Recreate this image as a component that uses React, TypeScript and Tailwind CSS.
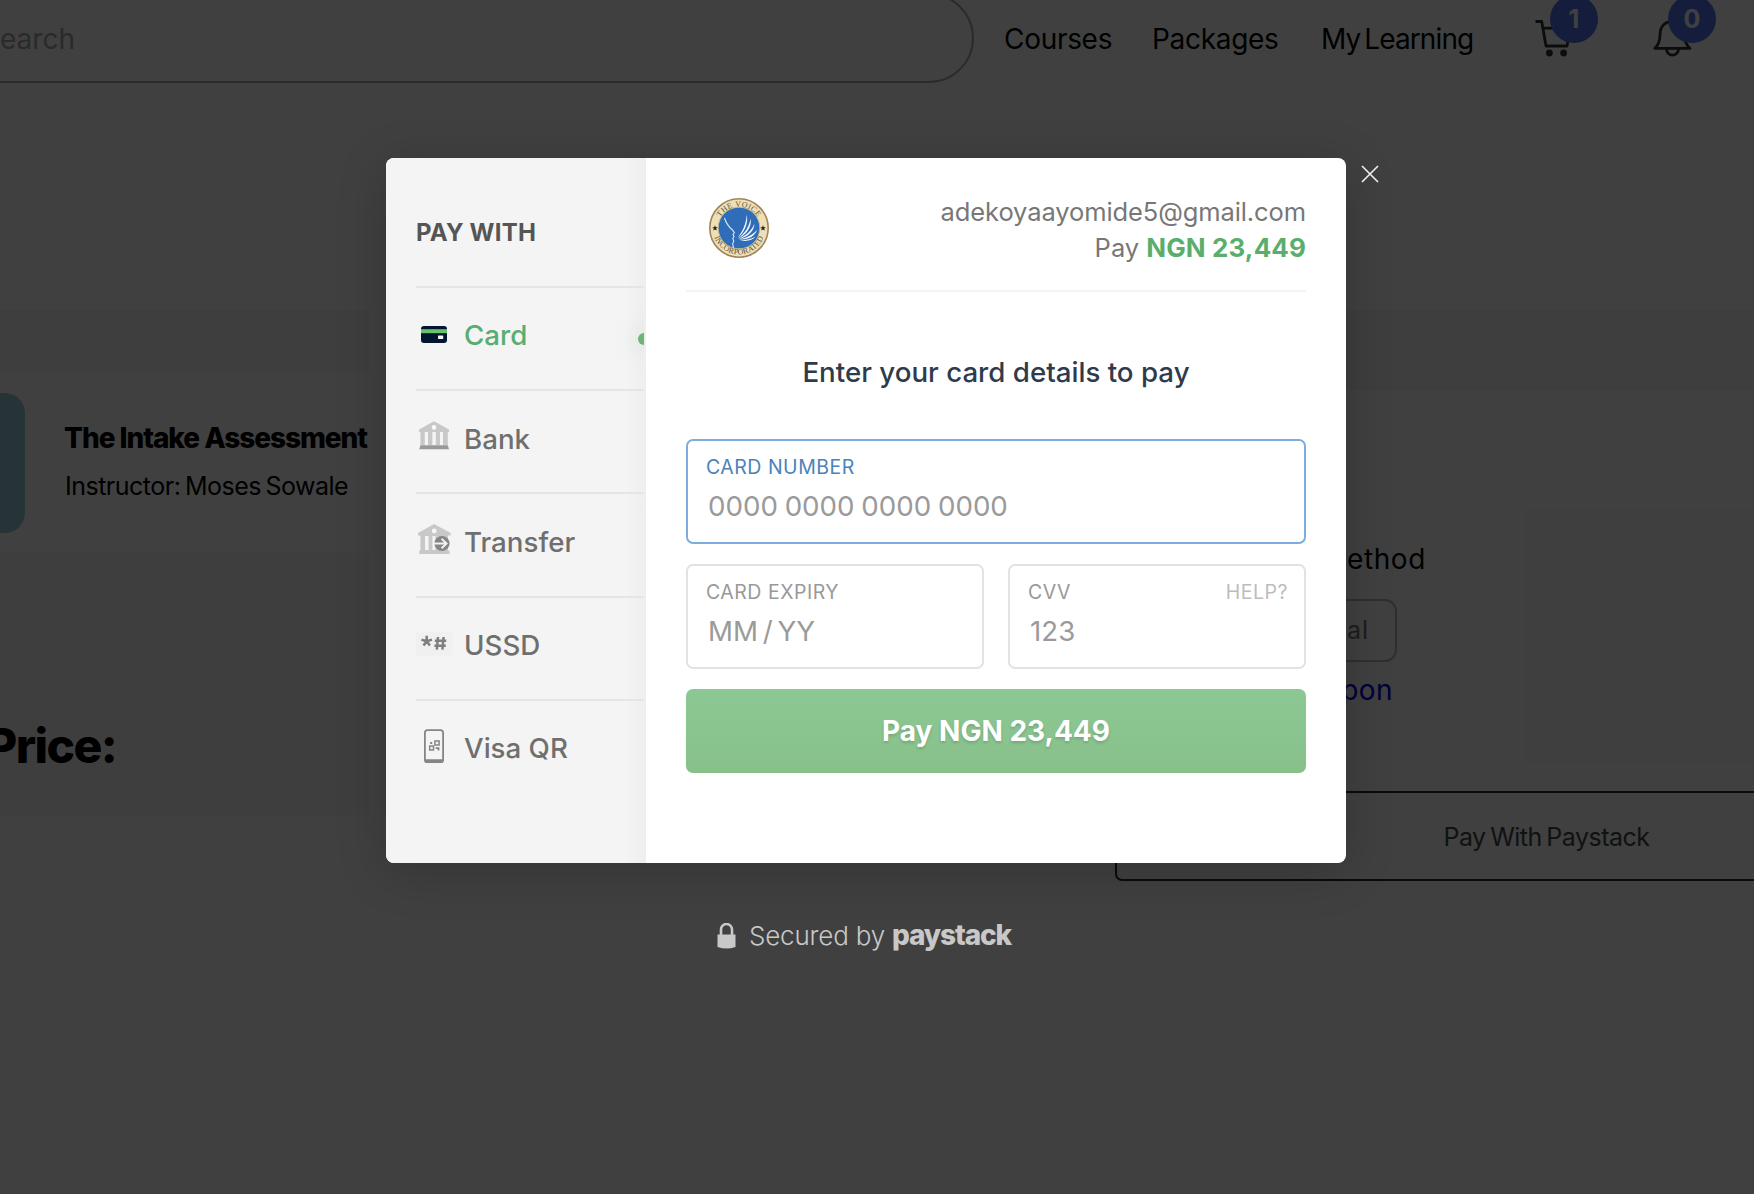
import React from "react";

const CardIcon = () => (
  <svg viewBox="0 0 36 36" className="size-9">
    <rect x="5" y="10" width="26" height="17" rx="3" fill="#04162f" />
    <rect x="5" y="13.2" width="26" height="4" fill="#68c46c" />
    <rect x="22" y="19.5" width="5.2" height="3.6" rx="0.6" fill="#f4f4f4" />
  </svg>
);

const BankIcon = () => (
  <svg viewBox="0 0 36 36" className="size-9">
    <path d="M18 2.3 33 10.6V13H31.8V26H27V13H24V26H19.8V13H16.4V26H12V13H8.8V26H4.4V13H3V10.6Z" fill="#c8c8c8" />
    <circle cx="18" cy="8.4" r="2.3" fill="#f8f8f8" />
    <path d="M4.400 26.200H31.800L33 30.200H3.200Z" fill="#999" />
  </svg>
);

const TransferIcon = () => (
  <svg viewBox="0 0 36 36" className="size-9">
    <path d="M18 2 34.6 11V13.6H32V28L33.6 29V32H3.2V29L4.4 28V13.6H2V11Z" fill="#c8c8c8" />
    <rect x="9" y="14" width="3.6" height="14" fill="#f4f4f4" />
    <rect x="16.4" y="14" width="3" height="14" fill="#f4f4f4" />
    <circle cx="18.2" cy="9" r="2.4" fill="#f6f6f6" />
    <circle cx="26" cy="21.5" r="7.6" fill="#858585" />
    <path d="M18 21.5H30.5M25.6 16.7 30.6 21.5 25.6 26.3" fill="none" stroke="#f1f1f1" strokeWidth="1.9" />
  </svg>
);

const UssdIcon = () => (
  <svg viewBox="0 0 36 36" className="size-9 overflow-visible">
    <rect x="-1" y="6.6" width="37.5" height="24" fill="#f0f0f0" />
    <g fill="none" stroke="#7f7f7f" strokeWidth="2.5">
      <path d="M10.7 10.7V16.2M10.7 16.2 5.4 14.6M10.7 16.2 16 14.6M10.7 16.2 7.5 20.5M10.7 16.2 13.9 20.5" />
      <path d="M22 12 20.8 24.6M27.6 12 26.4 24.6M18.8 15.8H30.2M18.4 20.8H29.8" />
    </g>
  </svg>
);

const QrIcon = () => (
  <svg viewBox="0 0 36 36" className="size-9">
    <rect x="8.9" y="2.1" width="18.2" height="32" rx="2.6" fill="none" stroke="#858585" strokeWidth="1.8" />
    <path d="M8.5 31.2H27.5V32.5Q27.5 35 25 35H11Q8.5 35 8.5 32.5Z" fill="#858585" />
    <g fill="none" stroke="#858585" strokeWidth="1.5">
      <rect x="18.9" y="13" width="4.2" height="4" />
      <rect x="13.7" y="18" width="3.8" height="4" />
    </g>
    <rect x="14.2" y="14" width="2" height="2" fill="#858585" />
    <path d="M19.6 19.2H23.4V22.6H21.6V21H19.6Z" fill="#858585" />
  </svg>
);

const BrandLogo = () => (
  <svg viewBox="0 0 60 60" className="size-[60px]">
    <defs>
      <path id="logo-top" d="M8.6 30A21.4 21.4 0 0 1 51.4 30" />
      <path id="logo-bottom" d="M3.6 30A26.4 26.4 0 0 0 56.4 30" />
    </defs>
    <circle cx="30" cy="30" r="29.2" fill="#eedfb6" stroke="#a08455" strokeWidth="1.6" />
    <circle cx="30" cy="30" r="20.8" fill="#2f6db8" stroke="#cdb98c" strokeWidth="0.8" />
    <g fontFamily="Liberation Serif, serif" fontSize="8" fill="#5e5238" textAnchor="middle">
      <text letterSpacing="0.3">
        <textPath href="#logo-top" startOffset="50%">THE VOICE</textPath>
      </text>
      <text letterSpacing="0.2">
        <textPath href="#logo-bottom" startOffset="50%">INCORPORATED</textPath>
      </text>
    </g>
    <path d="M6 27.2 6.8 29.2 8.8 29.3 7.2 30.6 7.8 32.6 6 31.4 4.2 32.6 4.8 30.6 3.2 29.3 5.2 29.2Z" fill="#222" />
    <path d="M54 27.2 54.8 29.2 56.8 29.3 55.2 30.6 55.8 32.6 54 31.4 52.2 32.6 52.8 30.6 51.2 29.3 53.2 29.2Z" fill="#222" />
    <path d="M15.5 20C17 25 20 29 23.5 32L25.4 34.6 24 36.6 25 38.6 23.8 40.6 24.8 43 23.6 46 24.6 50" fill="none" stroke="#d6e6f5" strokeWidth="1.1" />
    <g fill="#f2f8fd">
      <path d="M28.5 40C33 34 37 27 37.8 16.5 39.5 26 35.5 34 28.5 40Z" />
      <path d="M29 40.6C36 35 40 29 41.6 20.5 43 29 37.5 36.5 29 40.6Z" />
      <path d="M29.5 41C37.5 37.5 43 32 45.4 25.5 45.5 33 38.5 39.5 29.5 41Z" />
      <path d="M30 41.4C38 40 44.5 36.5 48 31.8 46 38.5 38.5 42.2 30 41.4Z" />
      <path d="M30 41.8C36 42.6 42 41.5 46.5 38.6 43 43 36 44 30 41.8Z" />
    </g>
  </svg>
);

const methods = [
  { label: "Card", icon: <CardIcon />, active: true },
  { label: "Bank", icon: <BankIcon />, active: false },
  { label: "Transfer", icon: <TransferIcon />, active: false },
  { label: "USSD", icon: <UssdIcon />, active: false },
  { label: "Visa QR", icon: <QrIcon />, active: false },
];

function Header() {
  return (
    <header className="flex h-[83px] w-[1754px] text-[28px] leading-[40px] text-black">
      <div className="-mt-[7px] -ml-[200px] flex h-[90px] w-[1174px] shrink-0 items-center rounded-[45px] border-2 border-[#acacac] pt-[2px] pl-[198px]">
        <span className="text-[#a4a8aa]">earch</span>
      </div>
      <nav className="mt-[19px] flex h-10 whitespace-nowrap">
        <a className="ml-[30px] w-[148px] tracking-[-0.3px]">Courses</a>
        <a className="w-[169px] tracking-[-0.3px]">Packages</a>
        <a className="w-[212px] tracking-[-0.9px] [word-spacing:-3px]">My Learning</a>
      </nav>
      <div className="relative mt-[18px] h-[40px] w-[118px] shrink-0">
        <svg viewBox="0 0 40 40" className="size-10" fill="none" stroke="#2c3032" strokeWidth="2.8" strokeLinejoin="round">
          <path d="M2.500 3.500H8.700L13 28H34L37 10.200H10" />
          <circle cx="16.400" cy="35" r="2" fill="#2c3032" />
          <circle cx="30.600" cy="35" r="2" fill="#2c3032" />
        </svg>
        <span className="absolute -top-[23px] left-[17px] flex size-12 items-center justify-center rounded-full bg-[#5078f0] text-[25px] font-bold text-white">1</span>
      </div>
      <div className="relative mt-[18px] h-[40px] w-[60px] shrink-0">
        <svg viewBox="0 0 42 40" className="h-10 w-[42px]" fill="none" stroke="#2c3032" strokeWidth="2.8" strokeLinejoin="round">
          <path d="M3.800 30.400C7.500 27 9 23 9 17C9 8 14 3.500 21.500 3.500S33.500 8 33.500 17C33.500 23 35 27 39 30.400Z" />
          <path d="M15.500 31A6 6.200 0 0 0 27.500 31" />
        </svg>
        <span className="absolute -top-[23px] left-[17px] flex size-12 items-center justify-center rounded-full bg-[#5078f0] text-[25px] font-bold text-white">0</span>
      </div>
    </header>
  );
}

function CheckoutPage() {
  return (
    <div className="h-[1194px] w-[1754px] overflow-hidden bg-white text-black">
      <Header />
      <main className="mt-[227px] flex h-[884px] w-[1754px]">
        <section className="w-[1075px] shrink-0">
          <div className="h-[505px] w-[370px] bg-[#f8f8f8] pt-[62px]">
            <div className="flex h-[181px] items-center bg-white">
              <div className="h-[140px] w-[25px] rounded-r-[20px] bg-[#98d0dc]" />
              <div className="ml-[39px] pb-[2px] whitespace-nowrap">
                <p className="text-[28px] leading-[48px] font-extrabold tracking-[-1.050px]">The Intake Assessment</p>
                <p className="ml-px text-[25px] leading-[48px] tracking-[-0.500px] [word-spacing:-2px]">Instructor: Moses Sowale</p>
              </div>
            </div>
            <h2 className="-ml-[14px] mt-[163px] text-[48px] leading-[60px] font-extrabold tracking-[-1.600px]">Price:</h2>
          </div>
        </section>
        <aside className="h-[690px] w-[943px] shrink-0 rounded-[20px] bg-[#f8f8f8] pt-[80px]">
          <div className="h-[610px] rounded-[20px] bg-[#fdfdfd] pl-[40px] whitespace-nowrap">
            <p className="w-[311px] pt-[149px] text-right text-[28px] leading-[40px] tracking-[0.600px]">Payment Method</p>
            <div className="mt-[20px] flex h-[63px] w-[282px] items-center justify-end rounded-[12px] border-2 border-[#b8bcbe] pr-[26px] text-[25px] tracking-[0.900px] text-[#74797b]">
              Paypal
            </div>
            <p className="mt-[8px] w-[278px] text-right text-[28px] leading-[40px] tracking-[0.400px] text-[#0000ee]">Apply Coupon</p>
            <div className="mt-[81px] flex h-[90px] w-[863px] items-center justify-center rounded-[7px] border-2 border-[#222a2c] pt-[3px] text-[25px] tracking-[-0.500px] text-[#43494c] [word-spacing:-2px]">
              <span>Pay With Paystack</span>
            </div>
          </div>
        </aside>
      </main>
    </div>
  );
}

function Sidebar() {
  return (
    <aside className="w-[260px] shrink-0 bg-[linear-gradient(to_right,#f4f4f4_0,#f4f4f4_240px,#eeeeee_260px)] pr-[2px] pl-[30px]">
      <h2 className="h-[128px] pt-[57px] text-[24px] leading-[36px] font-bold tracking-[0.2px] text-[#555]">PAY WITH</h2>
      <ul>
        {methods.map((m) => (
          <li key={m.label} className="relative flex h-[103.200px] items-center gap-[12px] overflow-hidden border-t-2 border-[#e5e5e5] pb-[5px]">
            <span className="mb-[5px] shrink-0">{m.icon}</span>
            <span className={m.active ? "text-[27.700px] font-medium text-[#58ad70]" : "text-[27.700px] font-medium text-[#6f6f6f]"}>{m.label}</span>
            {m.active && (
              <i className="absolute top-[45px] -right-[6px] size-3 rounded-full bg-[#6fb377] shadow-[0_0_22px_10px_rgba(120,180,120,0.08)]" />
            )}
          </li>
        ))}
      </ul>
    </aside>
  );
}

function Field({ label, hint, focus, help }: { label: string; hint: string; focus?: boolean; help?: boolean }) {
  return (
    <div className={focus ? "h-[105px] rounded-[7px] border-2 border-[#7badde] px-[18px] pt-[14px]" : "h-[105px] rounded-[7px] border-2 border-[#e2e2e2] px-[18px] pt-[14px]"}>
      <div className="flex justify-between text-[19.5px] leading-[24px] tracking-[0.5px]">
        <span className={focus ? "text-[#4c82bb]" : "text-[#999]"}>{label}</span>
        {help && <span className="-mr-[2px] text-[#bdbdbd]">HELP?</span>}
      </div>
      <div className="pt-[7px] pl-[2px] text-[27.700px] leading-[40px] text-[#9a9a9a]">
        <span className={focus ? "[word-spacing:-1px]" : "[word-spacing:-3px]"}>{hint}</span>
      </div>
    </div>
  );
}

export default function App() {
  return (
    <div className="relative h-[1194px] w-[1754px] overflow-hidden font-['Inter',sans-serif]">
      <CheckoutPage />
      <div className="absolute inset-0 flex flex-col bg-black/75 pt-[158px] pl-[386px]">
        <div className="flex">
          <div className="flex h-[705px] w-[960px] overflow-hidden rounded-[8px] bg-white shadow-[0_8px_50px_rgba(0,0,0,0.2)]">
            <Sidebar />
            <section className="w-[700px] px-[40px]">
              <div className="flex h-[134px] justify-between border-b-2 border-[#f4f4f4] pt-[36px]">
                <div className="mt-[4px] ml-[23px]">
                  <BrandLogo />
                </div>
                <div className="text-right text-[25.500px] leading-[36px] text-[#777]">
                  <p className="tracking-[-0.1px]">adekoyaayomide5@gmail.com</p>
                  <p>
                    Pay <b className="text-[26px] font-bold tracking-[0.100px] text-[#5aae6c]">NGN 23,449</b>
                  </p>
                </div>
              </div>
              <h1 className="pt-[60px] text-center text-[27.700px] leading-[40px] font-medium text-[#2f3b4c]">
                Enter your card details to pay
              </h1>
              <div className="mt-[47px] grid grid-cols-2 gap-x-[24px] gap-y-[20px]">
                <div className="col-span-2">
                  <Field label="CARD NUMBER" hint="0000 0000 0000 0000" focus />
                </div>
                <Field label="CARD EXPIRY" hint="MM / YY" />
                <Field label="CVV" hint="123" help />
              </div>
              <button className="mt-[20px] h-[84px] w-full rounded-[7px] bg-linear-to-b from-[#8cc894] to-[#88c08a] text-[28px] font-bold text-white [text-shadow:0_2px_3px_rgba(0,0,0,0.15)]">
                Pay NGN 23,449
              </button>
            </section>
          </div>
          <svg viewBox="0 0 18 18" className="mt-[7px] ml-[15px] size-[18px]" stroke="#f0f0f0" strokeWidth="1.6">
            <path d="M1 1 17 17M17 1 1 17" />
          </svg>
        </div>
        <div className="mt-[55px] ml-[331px] flex items-center whitespace-nowrap text-[#c8c8c8]">
          <svg viewBox="0 0 19 26" className="h-[26px] w-[19px]">
            <path d="M0.500 11.500H18.500V24Q9.500 27 0.500 24Z" fill="#c8c8c8" />
            <path d="M4 12V6.500A5.500 5.500 0 0 1 15 6.500V12" fill="none" stroke="#c8c8c8" strokeWidth="2.600" />
          </svg>
          <span className="ml-[13px] text-[26px] leading-[36px] font-light tracking-[-0.200px]">Secured by</span>
          <b className="mb-[2px] ml-[7px] text-[28px] leading-[34px] font-extrabold tracking-[-1.100px]">paystack</b>
        </div>
      </div>
    </div>
  );
}
